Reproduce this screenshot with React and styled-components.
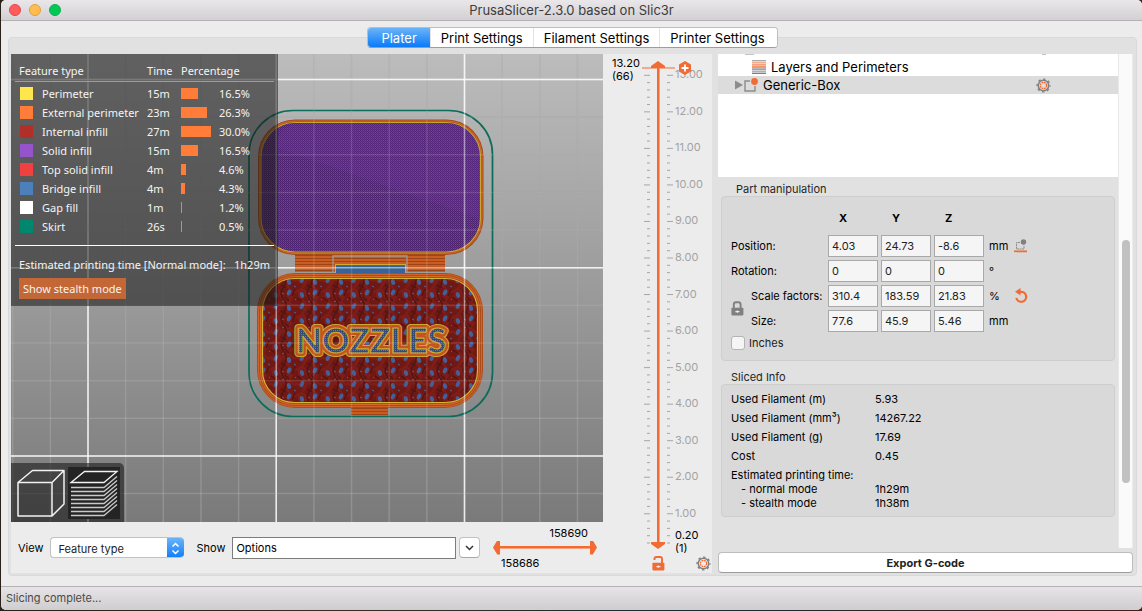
import { useState } from 'react';
import styled, { createGlobalStyle } from 'styled-components';

const ORANGE = '#f26b32';

const GlobalStyle = createGlobalStyle`
    * {
        box-sizing: border-box;
    }

    body {
        margin: 0;
        background: linear-gradient(90deg, #2a2118, #3a2a20 30%, #1d2b33 60%, #4a1d1a);
        font-family: Inter, 'Liberation Sans', sans-serif;
        font-size: 11px;
        line-height: 14px;
        color: #000;
    }

    button,
    input,
    select {
        font: inherit;
        color: inherit;
        margin: 0;
    }
`;

const Window = styled.div`
    display: flex;
    flex-direction: column;
    height: calc(100vh - 1px);
    min-height: 480px;
    margin-left: 1px;
    background: #ececec;
    border-radius: 5px;
    overflow: hidden;
`;

const TitleBar = styled.header`
    display: grid;
    grid-template-columns: 1fr auto 1fr;
    align-items: center;
    height: 21px;
    flex: none;
    padding: 0 8px;
    background: linear-gradient(#e9e7e9, #d2d0d2);
    border-bottom: 1px solid #b4b2b4;

    h1 {
        margin: 0;
        font-size: 13px;
        line-height: 16px;
        font-weight: 400;
        color: #3c3c3c;
    }
`;

const Lights = styled.div`
    display: flex;
    gap: 8px;
`;

const Light = styled.button`
    width: 12px;
    height: 12px;
    padding: 0;
    border-radius: 50%;
    border: 1px solid ${(p) => p.$edge};
    background: ${(p) => p.$fill};
`;

const Body = styled.main`
    display: flex;
    flex-direction: column;
    flex: 1;
    min-height: 0;
    padding: 6px 5px 10px 7px;
`;

const Tabs = styled.nav`
    display: flex;
    align-self: center;
    flex: none;
    height: 21px;
    margin-bottom: -11px;
    position: relative;
    z-index: 1;
    border-radius: 4px;
    border: 1px solid #bdbdbd;
    border-bottom-color: #9d9d9d;
    background: #fff;
    overflow: hidden;
`;

const Tab = styled.button`
    padding: 0 ${(p) => (p.$active ? 13 : 10)}px;
    border: 0;
    border-left: 1px solid #e3e3e3;
    font-size: 13px;
    line-height: 18px;
    color: ${(p) => (p.$active ? '#fff' : '#000')};
    background: ${(p) =>
        p.$active ? 'linear-gradient(#6bb3f8, #0a7bf8)' : '#fff'};

    &:first-child {
        border-left: 0;
    }

    &:last-child {
        padding-right: 12px;
    }
`;

const Notebook = styled.div`
    display: flex;
    flex: 1;
    min-height: 0;
    gap: 6px;
    padding: 16px 3px 2px 2px;
    background: #e1e1e1;
    border: 1px solid #d9d9d9;
    border-radius: 4px;
`;

const Plater = styled.section`
    display: flex;
    flex: 1;
    min-width: 0;
    background: #ececec;
`;

const Preview = styled.div`
    display: flex;
    flex-direction: column;
    flex: 1;
    min-width: 0;
`;

const Viewport = styled.div`
    position: relative;
    flex: 1;
    min-height: 0;
    overflow: hidden;
    background: linear-gradient(#bcbcbc, #7a7a7a);
`;

const Scene = styled.svg`
    display: block;
    width: 100%;
    height: 100%;
`;

const Legend = styled.div`
    position: absolute;
    top: 0;
    left: 0;
    width: 267px;
    padding: 6px 4px 7px;
    background: rgba(25, 25, 25, 0.56);
    color: #f4f4f4;
    font-family: 'Noto Sans', sans-serif;
    font-size: 11px;
    line-height: 19px;
    white-space: nowrap;
`;

const LegendTable = styled.table`
    width: 100%;
    table-layout: fixed;
    border-collapse: collapse;

    th {
        height: 21px;
        padding: 0;
        font-weight: 400;
        text-align: left;
        border-bottom: 1px solid #ff7d38;
    }

    th:first-child {
        padding-left: 4px;
    }

    td {
        height: 19px;
        padding: 0;
    }

    tbody tr:first-child td {
        height: 21px;
        padding-top: 2px;
    }
`;

const Swatch = styled.i`
    display: block;
    width: 13px;
    height: 13px;
    margin-left: 5px;
    background: ${(p) => p.$color};
`;

const Share = styled.i`
    display: block;
    height: 11px;
    background: #ff7d38;
`;

const Estimate = styled.p`
    display: flex;
    justify-content: space-between;
    margin: 9px 0 0;
    padding: 9px 4px 0;
    border-top: 1px solid #fff;
`;

const StealthButton = styled.button`
    display: block;
    height: 21px;
    margin: 4px 4px 0;
    padding: 0 4px;
    border: 0;
    background: #c46737;
    line-height: 21px;
`;

const ViewToggle = styled.div`
    position: absolute;
    left: 0;
    bottom: 0;
    display: flex;
    gap: 2px;
    padding: 4px 4px 3px 3px;
    border-radius: 0 5px 0 0;
    background: rgba(20, 20, 20, 0.56);
`;

const ViewButton = styled.button`
    width: 52px;
    height: 52px;
    padding: 0;
    border: 0;
    background: ${(p) => (p.$active ? '#242424' : 'transparent')};

    svg {
        display: block;
    }
`;

const PreviewBar = styled.div`
    display: flex;
    align-items: center;
    flex: none;
    height: 51px;
    padding: 0 6px 0 7px;
    font-size: 11px;
`;

const SelectBox = styled.div`
    display: grid;
    width: 134px;
    height: 21px;
    margin: 0 12px 0 7px;
    border-radius: 4px;
    border: 1px solid #c2c2c2;
    border-right: 0;
    background: #fff;
    overflow: hidden;

    select {
        grid-area: 1 / 1;
        appearance: none;
        border: 0;
        padding: 0 7px;
        background: transparent;
        color: #222;
    }

    svg {
        grid-area: 1 / 1;
        justify-self: end;
        align-self: center;
        pointer-events: none;
        background: linear-gradient(#6bb3f8, #0a7bf8);
    }
`;

const OptionsInput = styled.input`
    flex: 1;
    min-width: 60px;
    height: 22px;
    margin: 0 3px 0 7px;
    padding: 0 3px;
    border: 1px solid #7c7c7c;
    background: #fff;
`;

const DropButton = styled.button`
    display: grid;
    place-items: center;
    width: 21px;
    height: 21px;
    padding: 0;
    margin-right: 13px;
    border: 1px solid #c2c2c2;
    border-bottom-color: #a8a8a8;
    border-radius: 4px;
    background: #fff;
`;

const MoveRange = styled.div`
    display: grid;
    grid-template-rows: 14px 16px 14px;
    width: 104px;

    span:first-child {
        justify-self: end;
        padding-right: 9px;
    }

    span:last-child {
        padding-left: 8px;
    }
`;

const thumbShapes = {
    left: 'polygon(0 50%, 60% 0, 100% 0, 100% 100%, 60% 100%)',
    right: 'polygon(100% 50%, 40% 0, 0 0, 0 100%, 40% 100%)',
    up: 'polygon(50% 0, 100% 70%, 100% 100%, 0 100%, 0 70%)',
    down: 'polygon(50% 100%, 100% 30%, 100% 0, 0 0, 0 30%)',
};

const RangeInput = styled.input`
    grid-area: 1 / 1;
    appearance: none;
    min-width: 0;
    background: transparent;
    pointer-events: none;
    width: ${(p) => (p.$vertical ? '14px' : '100%')};
    height: ${(p) => (p.$vertical ? '100%' : '14px')};
    ${(p) => p.$vertical && 'writing-mode: vertical-lr; direction: rtl;'}

    &::-webkit-slider-thumb {
        appearance: none;
        pointer-events: auto;
        width: ${(p) => (p.$vertical ? 14 : 7)}px;
        height: ${(p) => (p.$vertical ? 7 : 14)}px;
        background: ${ORANGE};
        clip-path: ${(p) => thumbShapes[p.$shape]};
    }
`;

const RangeTrack = styled.div`
    display: grid;
    place-items: center;
    min-height: 0;
    ${(p) => p.$vertical && 'grid-area: 1 / 2; padding: 4px 0 6px;'}

    &::before {
        content: '';
        grid-area: 1 / 1;
        width: ${(p) => (p.$vertical ? '3px' : 'calc(100% - 12px)')};
        height: ${(p) => (p.$vertical ? 'calc(100% - 10px)' : '3px')};
        background: linear-gradient(
            ${(p) => (p.$vertical ? '90deg' : '180deg')},
            ${ORANGE} 67%,
            #f9a27c 67%
        );
    }
`;

const LayerSlider = styled.aside`
    display: flex;
    flex-direction: column;
    flex: none;
    width: 109px;
    padding: 3px 0 0;
`;

const LayerScale = styled.div`
    display: grid;
    grid-template-columns: 39px 32px 1fr;
    grid-template-rows: minmax(0, 1fr);
    flex: 1;
    min-height: 0;
    line-height: 13px;
`;

const ScaleDrawing = styled.div`
    grid-area: 1 / 1 / 2 / 4;
    min-height: 0;
    margin: 11px 0 12px;

    svg {
        display: block;
        width: 100%;
        height: 100%;
        overflow: visible;
    }
`;

const LayerLabel = styled.div`
    grid-area: 1 / ${(p) => p.$column};
    align-self: ${(p) => p.$align};
    padding-left: ${(p) => (p.$column === 1 ? 9 : 1)}px;
`;

const LayerTools = styled.div`
    display: flex;
    justify-content: space-between;
    padding: 0 1px 2px 47px;
`;

const IconButton = styled.button`
    display: grid;
    place-items: center;
    width: 16px;
    height: 16px;
    padding: 0;
    border: 0;
    background: transparent;
`;

const Sidebar = styled.aside`
    display: flex;
    flex-direction: column;
    flex: none;
    width: 415px;
    gap: 4px;
`;

const SidebarScroll = styled.div`
    display: flex;
    flex: 1;
    min-height: 0;
    overflow: hidden;
`;

const SidebarContent = styled.div`
    flex: 1;
    min-width: 0;
`;

const ScrollTrack = styled.div`
    display: flex;
    flex-direction: column;
    width: 15px;
    padding: 0 3px;
    background: #fafafa;
    border-left: 1px solid #e8e8e8;
    border-right: 1px solid #ececec;

    &::before {
        content: '';
        flex: 186;
    }

    &::after {
        content: '';
        flex: 65;
    }
`;

const ScrollThumb = styled.div`
    flex: 243;
    width: 8px;
    border-radius: 4px;
    background: #c1c1c1;
`;

const ObjectList = styled.ul`
    height: 123px;
    margin: 0;
    padding: 0;
    list-style: none;
    background: #fff;
    overflow: hidden;
`;

const ObjectRow = styled.li`
    display: flex;
    align-items: center;
    height: 18px;
    padding: 0 67px 0 ${(p) => p.$indent}px;
    background: ${(p) => (p.$selected ? '#dcdcdc' : '#fff')};
    font-size: 13px;
    line-height: 16px;

    &:first-child {
        height: 4px;
        align-items: flex-end;
        overflow: hidden;
        justify-content: space-between;
    }

    span {
        flex: 1;
        padding-left: 5px;
    }
`;

const GroupTitle = styled.h2`
    margin: 0;
    padding: ${(p) => (p.$first ? '5px 0 0 18px' : '9px 0 0 13px')};
    font-size: 11px;
    font-weight: 400;
    line-height: 14px;
    color: #262626;
`;

const Group = styled.div`
    margin: 0 3px;
    padding: ${(p) => p.$pad};
    border: 1px solid #cecece;
    border-radius: 4px;
    background: #d9d9d9;
`;

const PartGrid = styled.div`
    display: grid;
    grid-template-columns: 17px 74px repeat(3, 50px) 23px 16px;
    grid-template-rows: 25px;
    grid-auto-rows: 22px;
    align-items: center;
    gap: 3px;
    white-space: nowrap;

    b {
        align-self: start;
        padding: 4px 0 0 11px;
    }
`;

const Corner = styled.span`
    grid-column: span 2;
`;

const RowLabel = styled.span`
    grid-column: ${(p) => (p.$sub ? '2' : '1 / span 2')};
`;

const NumberInput = styled.input`
    width: 50px;
    height: 22px;
    padding: 0 3px 1px;
    border: 1px solid #a9a9a9;
    background: #f5f5f5;
    color: #222;
`;

const LockButton = styled(IconButton)`
    grid-area: 4 / 1 / span 2;
    justify-items: start;
    align-self: center;
`;

const Unit = styled.span`
    padding-left: 2px;
`;

const InchesLabel = styled.label`
    display: flex;
    align-items: center;
    gap: 4px;
    padding-top: 4px;
    color: #222;

    input {
        appearance: none;
        width: 14px;
        height: 14px;
        border: 1px solid #b4b4b4;
        border-radius: 3px;
        background: #f5f5f5;
    }
`;

const InfoTable = styled.table`
    border-collapse: collapse;

    th,
    td {
        padding: 0;
        font-weight: 400;
        text-align: left;
        line-height: 14px;
    }

    th {
        width: 144px;
    }
`;

const InfoRow = styled.tr`
    th,
    td {
        padding-bottom: ${(p) => (p.$tight ? 0 : 5)}px;
    }

    th {
        padding-left: ${(p) => (p.$indent ? 10 : 0)}px;
    }
`;

const ExportButton = styled.button`
    flex: none;
    height: 21px;
    padding: 0;
    border: 1px solid #bdbdbd;
    border-bottom-color: #9d9d9d;
    border-radius: 4px;
    background: #fff;
    font-weight: 700;
    color: #222;
`;

const StatusBar = styled.footer`
    flex: none;
    height: 24px;
    padding: 0 5px;
    border-top: 1px solid #b4b2b4;
    background: linear-gradient(#e6e4e6, #cfcdcf);
    color: #4a4a4a;
    line-height: 23px;
`;

const features = [
    { name: 'Perimeter', color: '#ffe64d', time: '15m', pct: 16.5 },
    { name: 'External perimeter', color: '#ff7d38', time: '23m', pct: 26.3 },
    { name: 'Internal infill', color: '#b03029', time: '27m', pct: 30.0 },
    { name: 'Solid infill', color: '#9654cc', time: '15m', pct: 16.5 },
    { name: 'Top solid infill', color: '#f04040', time: '4m', pct: 4.6 },
    { name: 'Bridge infill', color: '#4d80ba', time: '4m', pct: 4.3 },
    { name: 'Gap fill', color: '#ffffff', time: '1m', pct: 1.2 },
    { name: 'Skirt', color: '#00876e', time: '26s', pct: 0.5 },
];

const partRows = [
    { label: 'Position:', values: ['4.03', '24.73', '-8.6'], unit: 'mm' },
    { label: 'Rotation:', values: ['0', '0', '0'], unit: '°' },
    {
        label: 'Scale factors:',
        values: ['310.4', '183.59', '21.83'],
        unit: '%',
        sub: true,
    },
    { label: 'Size:', values: ['77.6', '45.9', '5.46'], unit: 'mm', sub: true },
];

const slicedInfo = [
    { label: 'Used Filament (m)', value: '5.93' },
    { label: 'Used Filament (mm³)', value: '14267.22' },
    { label: 'Used Filament (g)', value: '17.69' },
    { label: 'Cost', value: '0.45' },
    { label: 'Estimated printing time:', value: '', tight: true },
    { label: '- normal mode', value: '1h29m', tight: true, indent: true },
    { label: '- stealth mode', value: '1h38m', tight: true, indent: true },
];

const tabs = [
    'Plater',
    'Print Settings',
    'Filament Settings',
    'Printer Settings',
];

const GearIcon = () => (
    <svg width="15" height="15" viewBox="0 0 15 15" fill="none">
        <circle cx="7.5" cy="7.5" r="5.2" stroke="#808080" strokeWidth="1.5" />
        <circle
            cx="7.5"
            cy="7.5"
            r="6.4"
            stroke="#808080"
            strokeWidth="1.4"
            strokeDasharray="2.4 2.63"
            strokeDashoffset="1.2"
        />
        <circle
            cx="7.5"
            cy="7.5"
            r="3.1"
            stroke={ORANGE}
            strokeWidth="1.2"
            strokeDasharray="1.8 0.64"
        />
    </svg>
);

const LockIcon = ({ open, color }) => (
    <svg width="13" height="15" viewBox="0 0 13 15">
        <path
            d={open ? 'M2.5 4V2.8Q2.5 1 4.3 1h4Q10 1 10 2.8V7' : 'M2.8 7V3.5Q2.8 1.2 5 1.2h2.4Q9.6 1.2 9.6 3.5V7'}
            fill="none"
            stroke={color}
            strokeWidth="1.9"
        />
        <rect x="0.4" y="6.8" width="12" height="7.6" rx="0.8" fill={color} />
        <path d="M4.4 10.6h4M6.4 9.4v2.4" stroke="#ececec" strokeWidth="1.2" />
    </svg>
);

const gridLines = (start, count) =>
    Array.from({ length: count }, (_, i) => ({
        at: start + i * 37.65,
        index: i,
    }));

const Grid = ({ minor, minorOpacity, majorOpacity }) => (
    <g>
        {gridLines(1.7, 16).map(({ at, index }) => (
            <line
                key={`v${index}`}
                x1={at}
                x2={at}
                y1="0"
                y2="468"
                stroke={index % 5 === 2 ? '#fff' : minor}
                strokeWidth={1.5}
                strokeOpacity={index % 5 === 2 ? majorOpacity : minorOpacity}
            />
        ))}
        {gridLines(-12.2, 13).map(({ at, index }) => (
            <line
                key={`h${index}`}
                x1="0"
                x2="592"
                y1={at}
                y2={at}
                stroke={index % 5 === 1 ? '#fff' : minor}
                strokeWidth={1.5}
                strokeOpacity={index % 5 === 1 ? majorOpacity : minorOpacity}
            />
        ))}
    </g>
);

const Toolpaths = () => (
    <Scene viewBox="0 0 592 468" preserveAspectRatio="xMinYMin slice">
        <defs>
            <pattern id="solid" width="2" height="2" patternUnits="userSpaceOnUse">
                <rect width="2" height="2" fill="#4c2170" />
                <rect width="1" height="1" fill="#7a40aa" />
                <rect x="1" y="1" width="1" height="1" fill="#653092" />
            </pattern>
            <pattern id="bridge" width="2" height="2" patternUnits="userSpaceOnUse">
                <rect width="2" height="2" fill="#34497c" />
                <rect width="1" height="1" fill="#4f7cb4" />
            </pattern>
            <pattern id="infill" width="26" height="26" patternUnits="userSpaceOnUse">
                <rect width="26" height="26" fill="#701814" />
                <path
                    d="M0 4Q6 -2 9 6T18 8T26 4M0 17Q5 24 11 18T20 16T26 17M5 0Q-1 8 6 13T5 26M18 0Q24 7 18 13T18 26"
                    fill="none"
                    stroke="#7f1d18"
                    strokeWidth="2.6"
                />
                <path
                    d="M12 0Q8 6 13 12T12 26M24 1L21 8M0 10L5 13M10 23L15 26M14 9L18 13"
                    fill="none"
                    stroke="#541411"
                    strokeWidth="1.6"
                />
                <g fill="#41609c">
                    <ellipse cx="5" cy="7" rx="2" ry="3" transform="rotate(-20 5 7)" />
                    <ellipse cx="18" cy="4.5" rx="2" ry="3" transform="rotate(25 18 4.5)" />
                    <ellipse cx="5" cy="18" rx="2" ry="3" transform="rotate(25 5 18)" />
                    <ellipse cx="18" cy="20" rx="2" ry="3" transform="rotate(-20 18 20)" />
                </g>
                <path d="M11 5l2 1M24 12l1-1M11 14l2-1M23 24l2 1" stroke="#496799" strokeWidth="1" />
            </pattern>
            <pattern id="hinge" width="4" height="3" patternUnits="userSpaceOnUse">
                <rect width="4" height="3" fill="#c85c22" />
                <rect width="4" height="1" fill="#9c4518" />
            </pattern>
        </defs>

        <Grid minor="#8c8c8c" minorOpacity="0.36" majorOpacity="0.7" />

        {/* skirt */}
        <rect x="238" y="56.5" width="243.5" height="306" rx="44" fill="none" stroke="#0b6c59" strokeWidth="1.7" />

        {/* lid */}
        <rect x="247" y="65.5" width="225.5" height="135.5" rx="37" fill="#a84b1c" />
        <rect x="248.5" y="67" width="222.5" height="132.5" rx="35.5" fill="none" stroke="#d5662a" />
        <rect x="250" y="68.5" width="219.5" height="129.5" rx="34" fill="url(#solid)" stroke="#c6a62e" strokeWidth="1.2" />
        <path d="M266 94L469 165V104Q468 69 430 69H290Q268 70 264 92Z" fill="#7838a8" opacity="0.22" />

        {/* hinge and clasp */}
        <rect x="284" y="201" width="150" height="17" fill="url(#hinge)" />
        <path d="M322 218V202H396V218" fill="none" stroke="#a5978e" strokeWidth="1.3" />
        <rect x="324.5" y="210.5" width="70" height="9" fill="#386396" stroke="#d2aa2f" />
        <rect x="340" y="353" width="37" height="8" fill="url(#hinge)" />

        {/* box body */}
        <rect x="246" y="219" width="226" height="135" rx="38" fill="#ad4d1c" />
        <rect x="247.5" y="220.5" width="223" height="132" rx="36" fill="none" stroke="#cf632a" />
        <rect x="249.5" y="222.5" width="219" height="128" rx="34" fill="none" stroke="#d56a2d" />
        <rect x="251.5" y="224.5" width="215" height="124" rx="32" fill="url(#infill)" stroke="#d2b530" strokeWidth="1.2" />

        <g fontFamily="Lato" fontWeight="900" fontSize="34" textAnchor="middle" strokeLinejoin="round">
            <text x="360" y="299" fill="none" stroke="#cfa62e" strokeWidth="8" aria-hidden="true">NOZZLES</text>
            <text x="360" y="299" fill="none" stroke="#c3541f" strokeWidth="6" aria-hidden="true">NOZZLES</text>
            <text x="360" y="299" fill="url(#bridge)" stroke="#cfa62e" strokeWidth="1.2">NOZZLES</text>
        </g>

        <Grid minor="#fff" minorOpacity="0.12" majorOpacity="0.5" />
    </Scene>
);

const CubeIcon = () => (
    <svg width="52" height="52" fill="none" stroke="#f2f2f2" strokeWidth="1.5" strokeLinejoin="round">
        <path d="M4 15.5H38V49H4ZM4 15.5L18.5 3.5H50L38 15.5M50 3.5V37L38 49" />
    </svg>
);

const LayersIcon = () => (
    <svg width="52" height="52" fill="none" stroke="#c9c9c9" strokeWidth="1.3">
        <path d="M3 15.5L16.5 4.5H49L36 15.5Z" stroke="#f2f2f2" />
        {[19, 23, 27, 31, 35, 39, 43, 47].map((y) => (
            <path key={y} d={`M3 ${y + 1.5}H36L49 ${y - 9.5}`} />
        ))}
    </svg>
);

const LayerTicks = () => {
    const ticks = [];
    // one tick per layer height of 0.2 mm
    for (let step = 1; step <= 65; step++) {
        const major = step % 5 === 0;
        const y = `${((66 - step) / 65) * 100}%`;
        ticks.push(
            <g key={step} stroke="#a6a6a6">
                <line x1={major ? 41 : 44} x2="47" y1={y} y2={y} />
                <line x1="64" x2={major ? 70 : 67} y1={y} y2={y} />
                {major && (
                    <text x="72" y={y} dy="3" fill="#a3a3a3" stroke="none">
                        {(step / 5).toFixed(2)}
                    </text>
                )}
            </g>
        );
    }
    return (
        <svg fontSize="11">
            {ticks}
            <line x1="39" x2="72" y1="0" y2="0" stroke={ORANGE} />
            <path d="M82 -7L88 -3.5V3.5L82 7L76 3.5V-3.5Z" fill={ORANGE} />
            <path d="M82 -3.5V3.5M78.5 0H85.5" stroke="#fff" strokeWidth="1.8" />
        </svg>
    );
};

const PartIcon = () => (
    <svg width="14" height="14" fill="none">
        <path d="M6 3H1V13H11V8" stroke="#8c8c8c" strokeWidth="1.4" />
        <circle cx="10.5" cy="3.5" r="3.4" fill={ORANGE} />
    </svg>
);

const LayersRowIcon = () => (
    <svg width="14" height="15">
        {['#a9a9a9', '#f4a17f', '#f08a60', ORANGE, '#8c8c8c', '#a9a9a9', '#808080'].map(
            (color, i) => (
                <rect key={i} y={i * 2.1} width="14" height="1.4" fill={color} />
            )
        )}
    </svg>
);

const DropToBedIcon = () => (
    <svg width="14" height="14" fill="none">
        <path d="M6 3.5H2.5V10H10V6.5" stroke="#8c8c8c" strokeDasharray="2 0.6" />
        <circle cx="9.5" cy="3" r="2.7" fill="#808080" />
        <path d="M0 12.3H13" stroke={ORANGE} strokeWidth="1.7" />
    </svg>
);

const UndoIcon = () => (
    <svg width="15" height="16" fill="none">
        <path d="M4 3.8H7.5A5 5 0 1 1 2.3 10" stroke={ORANGE} strokeWidth="2.2" />
        <path d="M1 3.8L6.5 0V7.5Z" fill={ORANGE} />
    </svg>
);

const PartRow = ({ row, index }) => (
    <>
        <RowLabel $sub={row.sub}>{row.label}</RowLabel>
        {row.values.map((value, i) => (
            <NumberInput
                key={i}
                defaultValue={value}
                aria-label={`${row.label} ${'XYZ'[i]}`}
            />
        ))}
        <Unit>{row.unit}</Unit>
        {index === 0 && (
            <IconButton aria-label="Drop to bed">
                <DropToBedIcon />
            </IconButton>
        )}
        {index === 2 && (
            <IconButton aria-label="Reset scale">
                <UndoIcon />
            </IconButton>
        )}
    </>
);

const App = () => {
    const [activeTab, setActiveTab] = useState('Plater');
    const [layered, setLayered] = useState(true);
    const [inches, setInches] = useState(false);

    return (
        <>
            <GlobalStyle />
            <Window>
                <TitleBar>
                    <Lights>
                        <Light $fill="#ff5d5b" $edge="#e0474a" aria-label="Close" />
                        <Light $fill="#ffbd4f" $edge="#dfa03c" aria-label="Minimize" />
                        <Light $fill="#00c957" $edge="#0db04c" aria-label="Zoom" />
                    </Lights>
                    <h1>PrusaSlicer-2.3.0 based on Slic3r</h1>
                </TitleBar>

                <Body>
                    <Tabs>
                        {tabs.map((tab) => (
                            <Tab
                                key={tab}
                                $active={tab === activeTab}
                                onClick={() => setActiveTab(tab)}
                            >
                                {tab}
                            </Tab>
                        ))}
                    </Tabs>

                    <Notebook>
                        <Plater>
                            <Preview>
                                <Viewport>
                                    <Toolpaths />
                                    <Legend>
                                        <LegendTable>
                                            <colgroup>
                                                <col width="27" />
                                                <col width="105" />
                                                <col width="34" />
                                                <col width="38" />
                                                <col />
                                            </colgroup>
                                            <thead>
                                                <tr>
                                                    <th colSpan="2">Feature type</th>
                                                    <th>Time</th>
                                                    <th colSpan="2">Percentage</th>
                                                </tr>
                                            </thead>
                                            <tbody>
                                                {features.map((f) => (
                                                    <tr key={f.name}>
                                                        <td>
                                                            <Swatch $color={f.color} />
                                                        </td>
                                                        <td>{f.name}</td>
                                                        <td>{f.time}</td>
                                                        <td>
                                                            <Share style={{ width: Math.max(1, Math.round(f.pct)) }} />
                                                        </td>
                                                        <td>{f.pct.toFixed(1)}%</td>
                                                    </tr>
                                                ))}
                                            </tbody>
                                        </LegendTable>
                                        <Estimate>
                                            <span>Estimated printing time [Normal mode]:</span>
                                            <span>1h29m</span>
                                        </Estimate>
                                        <StealthButton>Show stealth mode</StealthButton>
                                    </Legend>
                                    <ViewToggle>
                                        <ViewButton
                                            aria-label="3D editor view"
                                            $active={!layered}
                                            onClick={() => setLayered(false)}
                                        >
                                            <CubeIcon />
                                        </ViewButton>
                                        <ViewButton
                                            aria-label="Preview"
                                            $active={layered}
                                            onClick={() => setLayered(true)}
                                        >
                                            <LayersIcon />
                                        </ViewButton>
                                    </ViewToggle>
                                </Viewport>

                                <PreviewBar>
                                    <label htmlFor="view">View</label>
                                    <SelectBox>
                                        <select id="view">
                                            <option>Feature type</option>
                                        </select>
                                        <svg width="17" height="21" fill="none" stroke="#fff" strokeWidth="1.5">
                                            <path d="M5.5 8.5L8.5 5.5L11.5 8.5M5.5 12.5L8.5 15.5L11.5 12.5" />
                                        </svg>
                                    </SelectBox>
                                    <label htmlFor="show">Show</label>
                                    <OptionsInput id="show" defaultValue="Options" />
                                    <DropButton aria-label="Show options">
                                        <svg width="9" height="6" fill="none" stroke="#333" strokeWidth="1.5">
                                            <path d="M1 1L4.5 4.5L8 1" />
                                        </svg>
                                    </DropButton>
                                    <MoveRange>
                                        <span>158690</span>
                                        <RangeTrack>
                                            <RangeInput type="range" min="158686" max="158690" defaultValue="158686" $shape="left" aria-label="First move" />
                                            <RangeInput type="range" min="158686" max="158690" defaultValue="158690" $shape="right" aria-label="Last move" />
                                        </RangeTrack>
                                        <span>158686</span>
                                    </MoveRange>
                                </PreviewBar>
                            </Preview>

                            <LayerSlider>
                                <LayerScale>
                                    <ScaleDrawing>
                                        <LayerTicks />
                                    </ScaleDrawing>
                                    <LayerLabel $column={1} $align="start">
                                        13.20
                                        <br />
                                        (66)
                                    </LayerLabel>
                                    <RangeTrack $vertical>
                                        <RangeInput type="range" min="1" max="66" defaultValue="66" $vertical $shape="up" aria-label="Top layer" />
                                        <RangeInput type="range" min="1" max="66" defaultValue="1" $vertical $shape="down" aria-label="Bottom layer" />
                                    </RangeTrack>
                                    <LayerLabel $column={3} $align="end">
                                        0.20
                                        <br />
                                        (1)
                                    </LayerLabel>
                                </LayerScale>
                                <LayerTools>
                                    <IconButton aria-label="Lock layers">
                                        <LockIcon open color={ORANGE} />
                                    </IconButton>
                                    <IconButton aria-label="Slider settings">
                                        <GearIcon />
                                    </IconButton>
                                </LayerTools>
                            </LayerSlider>
                        </Plater>

                        <Sidebar>
                            <SidebarScroll>
                                <SidebarContent>
                                    <ObjectList>
                                        <ObjectRow $indent={26}>
                                            <svg width="11" height="4">
                                                <path d="M1 0H10" stroke="#8c8c8c" />
                                            </svg>
                                            <svg width="15" height="4">
                                                <path d="M6 0H10" stroke="#808080" />
                                            </svg>
                                        </ObjectRow>
                                        <ObjectRow $indent={34}>
                                            <LayersRowIcon />
                                            <span>Layers and Perimeters</span>
                                        </ObjectRow>
                                        <ObjectRow $indent={17} $selected>
                                            <svg width="9" height="10">
                                                <path d="M0 0.5L8 5L0 9.5Z" fill="#8c8c8c" />
                                            </svg>
                                            <PartIcon />
                                            <span>Generic-Box</span>
                                            <GearIcon />
                                        </ObjectRow>
                                    </ObjectList>

                                    <GroupTitle $first>Part manipulation</GroupTitle>
                                    <Group $pad="10px 9px">
                                        <PartGrid>
                                            <Corner />
                                            <b>X</b>
                                            <b>Y</b>
                                            <b>Z</b>
                                            <Corner />
                                            {partRows.map((row, i) => (
                                                <PartRow key={row.label} row={row} index={i} />
                                            ))}
                                            <LockButton aria-label="Lock proportions">
                                                <LockIcon color="#808080" />
                                            </LockButton>
                                        </PartGrid>
                                        <InchesLabel>
                                            <input
                                                type="checkbox"
                                                checked={inches}
                                                onChange={(e) => setInches(e.target.checked)}
                                            />
                                            Inches
                                        </InchesLabel>
                                    </Group>

                                    <GroupTitle>Sliced Info</GroupTitle>
                                    <Group $pad="7px 9px 6px">
                                        <InfoTable>
                                            <tbody>
                                                {slicedInfo.map((row) => (
                                                    <InfoRow
                                                        key={row.label}
                                                        $tight={row.tight}
                                                        $indent={row.indent}
                                                    >
                                                        <th scope="row">{row.label}</th>
                                                        <td>{row.value}</td>
                                                    </InfoRow>
                                                ))}
                                            </tbody>
                                        </InfoTable>
                                    </Group>
                                </SidebarContent>
                                <ScrollTrack>
                                    <ScrollThumb />
                                </ScrollTrack>
                            </SidebarScroll>
                            <ExportButton>Export G-code</ExportButton>
                        </Sidebar>
                    </Notebook>
                </Body>

                <StatusBar>Slicing complete...</StatusBar>
            </Window>
        </>
    );
};

export default App;
